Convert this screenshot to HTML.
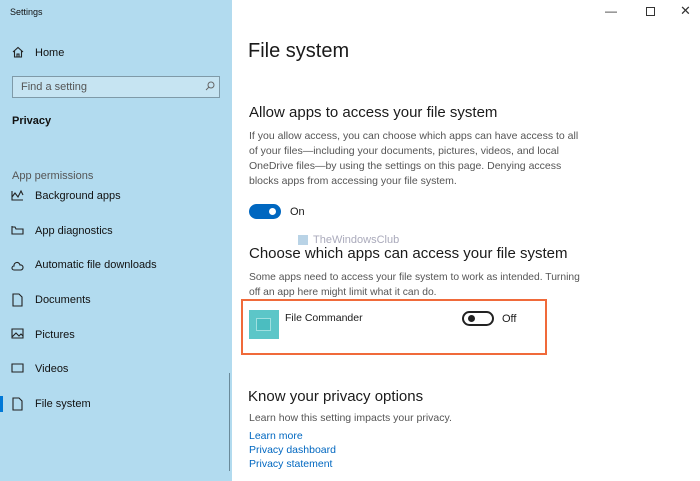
<!DOCTYPE html>
<html><head><style>
*{margin:0;padding:0;box-sizing:border-box}
body{width:700px;height:481px;overflow:hidden;background:#fff;font-family:"Liberation Sans",sans-serif;color:#000;position:relative}
.side{position:absolute;left:0;top:0;width:232px;height:481px;background:#b2dbef}
.t{position:absolute;white-space:nowrap}
.side .t{font-size:11px;color:#111}
.ic{position:absolute}
.main .t{color:#1a1a1a}
a{color:#0067c0;text-decoration:none}
</style></head><body>
<div class="side">
<div class="t" style="left:10px;top:7px;font-size:9px">Settings</div>
<svg class="ic" style="left:12px;top:46px" width="12" height="12" viewBox="0 0 12 12" fill="none" stroke="#222" stroke-width="1.1"><path d="M1 6 6 1.5 11 6M2.5 5v6h7V5M5 11V8h2v3"/></svg>
<div class="t" style="left:35px;top:47px">Home</div>
<div style="position:absolute;left:12px;top:76px;width:208px;height:22px;border:1px solid #7f9aa8;background:#c6e4f2"></div>
<div class="t" style="left:21px;top:81px;color:#555">Find a setting</div>
<svg class="ic" style="left:205px;top:81px" width="10" height="10" viewBox="0 0 10 10" fill="none" stroke="#666"><circle cx="6" cy="4" r="3"/><path d="M4 6 1 9"/></svg>
<div class="t" style="left:12px;top:115px;font-weight:bold">Privacy</div>
<div class="t" style="left:12px;top:170px;color:#555">App permissions</div>
<div class="t" style="left:35px;top:190px">Background apps</div>
<div class="t" style="left:35px;top:225px">App diagnostics</div>
<div class="t" style="left:35px;top:259px">Automatic file downloads</div>
<div class="t" style="left:35px;top:294px">Documents</div>
<div class="t" style="left:35px;top:329px">Pictures</div>
<div class="t" style="left:35px;top:363px">Videos</div>
<div class="t" style="left:35px;top:398px">File system</div>
<svg class="ic" style="left:11px;top:187px" width="14" height="230" viewBox="0 0 14 230" fill="none" stroke="#222" stroke-width="1.1">
<path d="M1 4v9h11M1 10l3-4 3 4 3-6 2 4"/>
<path d="M1 39v8h11v-5H5l-1-2H1"/>
<path d="M3 79a3 3 0 0 1 6-1 2.5 2.5 0 0 1 1 5H3a2 2 0 0 1 0-4z"/>
<path d="M2 107h6l3 3v9H2z"/>
<path d="M1 142h11v9H1zM1 150l4-4 3 3 2-2 2 2"/>
<path d="M1 177h11v8H1z"/>
<path d="M2 211h6l3 3v9H2z"/></svg>
<div style="position:absolute;left:0;top:396px;width:3px;height:16px;background:#0078d7"></div>
<div style="position:absolute;left:229px;top:373px;width:1px;height:98px;background:#6a8a9a"></div>
</div>
<div class="main">
<div class="t" style="left:605px;top:4px;font-size:12px;color:#333">—</div>
<div style="position:absolute;left:646px;top:7px;width:9px;height:9px;border:1px solid #333"></div>
<div class="t" style="left:680px;top:3px;font-size:13px;color:#333">✕</div>
<div class="t" style="left:248px;top:40px;font-size:20px">File system</div>
<div class="t" style="left:249px;top:104px;font-size:15px">Allow apps to access your file system</div>
<div class="t" style="left:249px;top:129px;font-size:10.5px;line-height:15px;color:#555;white-space:normal;width:336px">If you allow access, you can choose which apps can have access to all of your files—including your documents, pictures, videos, and local OneDrive files—by using the settings on this page. Denying access blocks apps from accessing your file system.</div>
<div style="position:absolute;left:249px;top:204px;width:32px;height:15px;border-radius:8px;background:#0067c0"></div>
<div style="position:absolute;left:269px;top:208px;width:7px;height:7px;border-radius:50%;background:#fff"></div>
<div class="t" style="left:290px;top:206px;font-size:11px">On</div>
<div class="t" style="left:313px;top:234px;font-size:11px;color:#aab">TheWindowsClub</div>
<div style="position:absolute;left:298px;top:235px;width:10px;height:10px;background:#b9d3e6"></div>
<div class="t" style="left:249px;top:245px;font-size:15px">Choose which apps can access your file system</div>
<div class="t" style="left:249px;top:270px;font-size:10.3px;line-height:15px;color:#555;white-space:normal;width:336px">Some apps need to access your file system to work as intended. Turning off an app here might limit what it can do.</div>
<div style="position:absolute;left:241px;top:299px;width:306px;height:56px;border:2px solid #f06a3a"></div>
<div style="position:absolute;left:249px;top:310px;width:30px;height:29px;background:#5cc6c8"></div>
<div style="position:absolute;left:256px;top:318px;width:15px;height:13px;border:1px solid #9fe0e0;background:#4bbdc0"></div>
<div class="t" style="left:285px;top:312px;font-size:10.5px">File Commander</div>
<div style="position:absolute;left:462px;top:311px;width:32px;height:15px;border-radius:8px;border:2px solid #222"></div>
<div style="position:absolute;left:468px;top:315px;width:7px;height:7px;border-radius:50%;background:#222"></div>
<div class="t" style="left:502px;top:313px;font-size:11px">Off</div>
<div class="t" style="left:248px;top:388px;font-size:15px">Know your privacy options</div>
<div class="t" style="left:249px;top:412px;font-size:10.5px;color:#555">Learn how this setting impacts your privacy.</div>
<div class="t" style="left:249px;top:430px;font-size:10.5px"><a>Learn more</a></div>
<div class="t" style="left:249px;top:444px;font-size:10.5px"><a>Privacy dashboard</a></div>
<div class="t" style="left:249px;top:458px;font-size:10.5px"><a>Privacy statement</a></div>
</div>
</body></html>
